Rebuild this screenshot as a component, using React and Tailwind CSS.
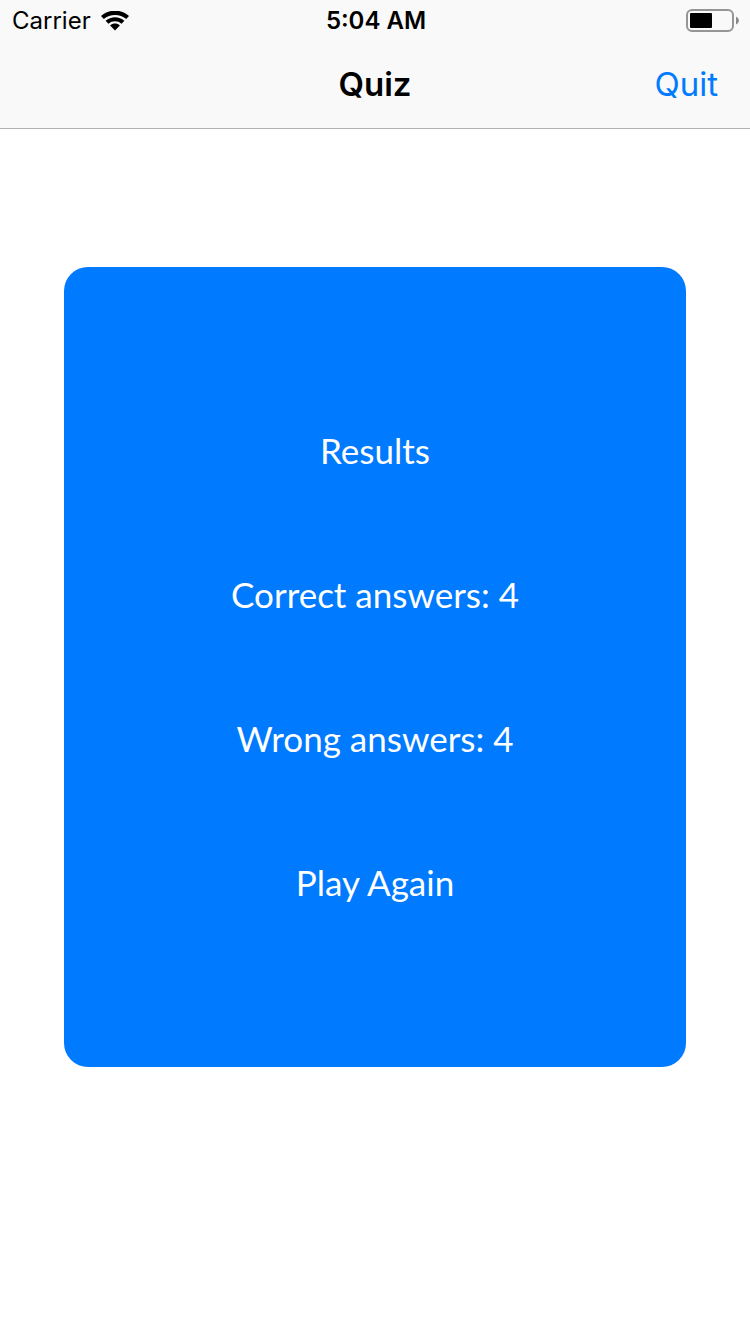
function StatusBar() {
  return (
    <div className="grid h-[42px] grid-cols-3 items-center pl-3 pr-2.5 text-2xl text-black">
      <div className="flex items-center gap-2.5">
        <span>Carrier</span>
        <svg className="h-5 w-7" viewBox="0 0 28 20" fill="currentColor" aria-hidden="true">
          <path d="M0 5C8 -2.2 20 -2.2 28 5L25.2 8C19 2.5 9 2.5 2.8 8Z" />
          <path d="M4.6 9.8C10 5 18 5 23.4 9.8L20.6 12.7C16.8 9.4 11.2 9.4 7.4 12.7Z" />
          <path d="M9.1 14.4C12 12 16 12 18.9 14.4L14 19.4Z" />
        </svg>
      </div>
      <time className="text-center font-semibold">5:04 AM</time>
      <svg className="h-6 w-[54px] justify-self-end" viewBox="0 0 54 24" role="img" aria-label="Battery">
        <rect x="1" y="1" width="46" height="21" rx="5" fill="none" stroke="#959595" strokeWidth="2" />
        <rect x="4" y="4" width="22" height="15" rx="1" fill="#000" />
        <path d="M50 7.5q3 1.3 3 4t-3 4z" fill="#8a8a8a" />
      </svg>
    </div>
  );
}

export default function App() {
  return (
    <div className="flex min-h-screen flex-col bg-white font-['Inter','Liberation_Sans',sans-serif]">
      <header className="border-b border-[#b2b2b2] bg-[#f9f9f9]">
        <StatusBar />
        <nav className="grid h-[86px] grid-cols-3 items-center px-8 text-[33px]">
          <h1 className="col-start-2 text-center font-semibold text-black">Quiz</h1>
          <button type="button" className="justify-self-end text-[#007aff]">Quit</button>
        </nav>
      </header>
      <main className="flex flex-1 flex-col px-16 pt-[138px]">
        <section className="flex flex-col items-center gap-24 rounded-3xl bg-[#007aff] pt-[159px] pb-[161px] font-['Lato',sans-serif] text-[35px] leading-12 text-white">
          <h2>Results</h2>
          <p>Correct answers: 4</p>
          <p>Wrong answers: 4</p>
          <button type="button">Play Again</button>
        </section>
      </main>
    </div>
  );
}
